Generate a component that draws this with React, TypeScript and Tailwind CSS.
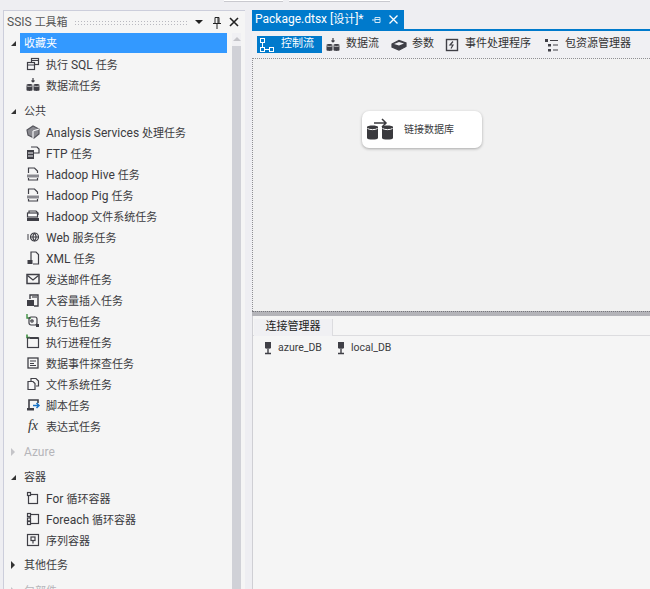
const ink = "#3f3f46";

function Svg({ children, w = 16, h = 16 }: { children: React.ReactNode; w?: number; h?: number }) {
  return (
    <svg width={w} height={h} viewBox={`0 0 ${w} ${h}`} className="shrink-0" fill="none" stroke={ink} strokeWidth="1.2">
      {children}
    </svg>
  );
}

const Db = ({ x, y }: { x: number; y: number }) => (
  <g transform={`translate(${x} ${y})`}>
    <path d="M0 1.500C0 .3 6 .3 6 1.500V6.500C6 7.700 0 7.700 0 6.500Z" fill={ink} stroke="none" />
    <path d="M0 2.200C1 3.200 5 3.200 6 2.200" stroke="#f5f5f5" strokeWidth=".7" />
  </g>
);

const icons: Record<string, React.ReactNode> = {
  sql: (
    <Svg>
      <rect x="6.500" y="2.500" width="7" height="6" />
      <rect x="2.500" y="6.500" width="7" height="7" fill="#f5f5f7" />
      <path d="M2.500 9h7M6.500 4.500h7" />
    </Svg>
  ),
  flow: (
    <Svg>
      <Db x={1.500} y={6.500} />
      <Db x={8.500} y={6.500} />
      <path d="M8 1v4M6.500 3.500 8 5l1.500-1.500" />
    </Svg>
  ),
  analysis: (
    <Svg>
      <path d="M2 6 8 2l6 3v5l-5 4-6-3Z" fill="#8a8a90" stroke="#55555c" />
      <path d="M8 7v7M8 7l6-2" stroke="#f5f5f7" />
    </Svg>
  ),
  ftp: (
    <Svg>
      <rect x="2" y="5" width="7" height="9" fill={ink} stroke="none" />
      <path d="M6 2h6l2 2v4h-5" />
      <path d="M3 8h5M3 11h5" stroke="#f5f5f7" />
    </Svg>
  ),
  doc: (
    <Svg>
      <path d="M3.500 7V2h6l3 3v2M3.500 12v2h9v-2" />
      <path d="M2 8.500h12v3H2Z" fill="#8a8a90" stroke="none" />
    </Svg>
  ),
  hdfs: (
    <Svg>
      <path d="M4 7V3h7l2 2v2" />
      <rect x="2.500" y="5" width="10" height="4" fill="#fff" />
      <path d="M2 10h12v3H2Z" fill={ink} stroke="none" />
    </Svg>
  ),
  web: (
    <Svg>
      <circle cx="9.500" cy="8" r="4" />
      <path d="M5.500 8h8M9.500 4c-2 2.500-2 5.500 0 8M9.500 4c2 2.500 2 5.500 0 8M2 6h2M2 8h2M2 10h2" />
    </Svg>
  ),
  xml: (
    <Svg>
      <path d="M6 11V2h5l2.500 2.500V14H8" />
      <rect x="2.500" y="10" width="5" height="4" fill={ink} stroke="none" />
    </Svg>
  ),
  mail: (
    <Svg>
      <rect x="2" y="3.500" width="12" height="9" strokeWidth="1.500" />
      <path d="m2.500 4.500 5.500 4.500 5.500-4.500" strokeWidth="1.300" />
    </Svg>
  ),
  bulk: (
    <Svg>
      <path d="M5 7V3h8v11H9" strokeWidth="1.400" />
      <path d="M2 8h7v6H2Z" fill={ink} stroke="none" />
      <path d="M7 5h5" />
    </Svg>
  ),
  pkg: (
    <Svg>
      <path d="M2 1v4h4" stroke="#3f9142" strokeWidth="1.400" />
      <rect x="4" y="4" width="8" height="8" rx="2" />
      <circle cx="7" cy="8" r="1.200" />
      <rect x="11" y="11" width="3" height="3" fill={ink} stroke="none" />
    </Svg>
  ),
  proc: (
    <Svg>
      <path d="M2 .5v3h3" stroke="#3f9142" strokeWidth="1.600" />
      <rect x="2.500" y="4" width="11" height="9.500" />
      <path d="M5 4h8.500" strokeWidth="2" />
    </Svg>
  ),
  probe: (
    <Svg>
      <rect x="3" y="3" width="10" height="10" strokeWidth="1.300" />
      <path d="M5 6h6M5 8.500h4M5 10.500h6" />
    </Svg>
  ),
  files: (
    <Svg>
      <path d="M6 5V2.500h5l2.500 2.500V10H11" />
      <path d="M3 5.500h5l2 2v6H3Z" fill="#f5f5f7" />
    </Svg>
  ),
  script: (
    <Svg>
      <path d="M4 11V3h9v3" strokeWidth="1.600" />
      <path d="M2 11h7v2.500H2Z" fill={ink} stroke="none" />
      <path d="M8 8.500h6M11.500 6l2.500 2.500-2.500 2.500" stroke="#1b74c7" strokeWidth="1.500" />
    </Svg>
  ),
  fx: (
    <span className="w-4 shrink-0 text-center font-['Liberation_Serif',serif] text-[14px] leading-4 text-[#333] italic">
      fx
    </span>
  ),
  forLoop: (
    <Svg>
      <rect x="3.500" y="4.500" width="9" height="9" />
      <rect x="2.500" y="2.500" width="3" height="3" fill="#f5f5f7" />
    </Svg>
  ),
  forEach: (
    <Svg>
      <rect x="5" y="3.500" width="8.500" height="9" />
      <rect x="2.500" y="2.500" width="3" height="3" fill="#f5f5f7" />
      <rect x="2.500" y="7" width="3" height="3" fill="#f5f5f7" />
      <rect x="2.500" y="10.500" width="3" height="3" fill="#f5f5f7" />
    </Svg>
  ),
  seq: (
    <Svg>
      <rect x="2.500" y="2.500" width="11" height="11" />
      <rect x="6" y="5" width="4" height="3.500" />
      <path d="M8 8.500v3" />
    </Svg>
  ),
};

// latin runs are set a bit larger than the chinese ones in the reference
const Mixed = ({ text }: { text: string }) => (
  <>
    {text.split(/([\u4e00-\u9fff]+)/).map((part, i) => (
      <span key={i} className={i % 2 ? "text-[11px]" : "text-[12px]"}>
        {part}
      </span>
    ))}
  </>
);

const Row = ({ icon, label }: { icon: string; label: string }) => (
  <div className="flex h-[21px] items-center gap-[5px] pl-[21px]">
    {icons[icon]}
    <span className="whitespace-pre">
      <Mixed text={label} />
    </span>
  </div>
);

function Section({
  label,
  open,
  active,
  muted,
  className,
}: {
  label: string;
  open?: boolean;
  active?: boolean;
  muted?: boolean;
  className?: string;
}) {
  return (
    <div className={`flex h-[20px] items-center ${className ?? ""}`}>
      <span className="flex w-[16px] shrink-0 justify-center pl-[2px]">
        {open ? (
          <span className="h-0 w-0 border-b-[5px] border-l-[5px] border-b-[#333] border-l-transparent" />
        ) : (
          <span
            className={`h-0 w-0 border-y-[4px] border-l-[4px] border-y-transparent ${
              muted ? "border-l-[#c4c4c8]" : "border-l-[#333]"
            }`}
          />
        )}
      </span>
      <span
        className={`flex h-[20px] flex-1 items-center pl-[4px] ${
          active ? "bg-[#3399ff] text-white" : muted ? "text-[#b5b5ba]" : ""
        }`}
      >
        <Mixed text={label} />
      </span>
    </div>
  );
}

function Toolbox() {
  return (
    <aside className="flex w-[242px] shrink-0 flex-col overflow-hidden border-t border-l border-[#cccedb] bg-[#f5f5f5] pr-[4px]">
      <div className="flex h-[22px] items-center pr-[2px] pl-[3px] leading-none whitespace-pre text-[#555]">
        <Mixed text="SSIS 工具箱" />
        <span className="mx-[6px] h-[5px] flex-1 bg-[radial-gradient(#b9b9c0_0.7px,transparent_0.8px)] bg-[length:3px_3px]" />
        <span className="mr-[9px] h-0 w-0 border-x-[4px] border-t-[4px] border-x-transparent border-t-[#222]" />
        <svg width="10" height="13" viewBox="0 0 10 13" className="mr-[7px]" fill="none" stroke="#222">
          <path d="M3 1.500h4v6H3ZM1 7.500h8M5 8v5M6 2v5" />
        </svg>
        <svg width="10" height="10" viewBox="0 0 10 10" stroke="#222" strokeWidth="1.600">
          <path d="m1 1 8 8M9 1 1 9" />
        </svg>
      </div>
      <div className="flex min-h-0 flex-1">
        <div className="min-w-0 flex-1 leading-none text-[#3b3b40]">
          <Section label="收藏夹" open active className="mr-[5px]" />
          <Row icon="sql" label="执行 SQL 任务" />
          <Row icon="flow" label="数据流任务" />
          <Section label="公共" open className="mt-[6px]" />
          <Row icon="analysis" label="Analysis Services 处理任务" />
          <Row icon="ftp" label="FTP 任务" />
          <Row icon="doc" label="Hadoop Hive 任务" />
          <Row icon="doc" label="Hadoop Pig 任务" />
          <Row icon="hdfs" label="Hadoop 文件系统任务" />
          <Row icon="web" label="Web 服务任务" />
          <Row icon="xml" label="XML 任务" />
          <Row icon="mail" label="发送邮件任务" />
          <Row icon="bulk" label="大容量插入任务" />
          <Row icon="pkg" label="执行包任务" />
          <Row icon="proc" label="执行进程任务" />
          <Row icon="probe" label="数据事件探查任务" />
          <Row icon="files" label="文件系统任务" />
          <Row icon="script" label="脚本任务" />
          <Row icon="fx" label="表达式任务" />
          <Section label="Azure" muted className="mt-[6px]" />
          <Section label="容器" open className="mt-[5px]" />
          <Row icon="forLoop" label="For 循环容器" />
          <Row icon="forEach" label="Foreach 循环容器" />
          <Row icon="seq" label="序列容器" />
          <Section label="其他任务" className="mt-[5px]" />
          <Section label="包部件" muted className="mt-[6px]" />
        </div>
        <div className="flex w-[9px] shrink-0 flex-col items-center bg-[#f0f0f3]">
          <span className="mt-[4px] mb-[5px] h-0 w-0 border-x-[4px] border-b-[4px] border-x-transparent border-b-[#c4c4c9]" />
          <div className="w-full flex-1 bg-[#d0d1d7]" />
        </div>
      </div>
    </aside>
  );
}

const DesignerTab = ({ label, active, icon }: { label: string; active?: boolean; icon: React.ReactNode }) => (
  <div
    className={`flex h-[17px] items-center gap-[5px] pl-[2px] ${
      active ? "bg-[#007acc] pr-[8px] text-white" : "pr-[3px] text-[#333]"
    }`}
  >
    {icon}
    {label}
  </div>
);

function Designer() {
  return (
    <main className="flex min-w-0 flex-1 flex-col overflow-hidden">
      <div className="flex h-[19px] w-[152px] shrink-0 items-center bg-[#007acc] pr-[6px] pl-[3px] text-[12px] whitespace-pre text-white">
        <span>
          <Mixed text="Package.dtsx [设计]*" />
        </span>
        <svg width="10" height="10" viewBox="0 0 10 10" className="mr-[7px] ml-auto" stroke="#cfe6f6" fill="none">
          <path d="M0 5h3M3 2.500v5h5v-5ZM3 4.500h5" />
        </svg>
        <svg width="9" height="9" viewBox="0 0 9 9" stroke="#fff" strokeWidth="1.300">
          <path d="m.5.5 8 8M8.500.5l-8 8" />
        </svg>
      </div>
      <div className="h-[2px] shrink-0 bg-[#007acc]" />
      <div className="flex h-[27px] shrink-0 items-center bg-[#f0f0f3] pl-[5px] text-[11px] whitespace-nowrap">
        <div className="mr-[1px]">
          <DesignerTab
            active
            label="控制流"
            icon={
              <svg width="17" height="16" viewBox="0 0 17 16" fill="none" stroke="#fff">
                <rect x="1.500" y="1.500" width="4" height="4" />
                <rect x="1.500" y="10.500" width="4" height="4" />
                <rect x="10.500" y="10.500" width="4" height="4" />
                <path d="M3.500 5.500v5M5.500 12.500h5" />
              </svg>
            }
          />
        </div>
        <div className="mr-[7px]">
          <DesignerTab label="数据流" icon={icons.flow} />
        </div>
        <div className="mr-[5px]">
          <DesignerTab
            label="参数"
            icon={
              <Svg>
                <path d="M1 7 8 3.500 15 6v3.500L8 13 1 10Z" fill={ink} />
                <path d="M3 7 8 5l5 1.500L8 8.500Z" fill="#f0f0f3" stroke="none" />
              </Svg>
            }
          />
        </div>
        <div className="mr-[8px]">
          <DesignerTab
            label="事件处理程序"
            icon={
              <Svg>
                <rect x="2.500" y="2.500" width="11" height="11" strokeWidth="1.400" />
                <path d="M9 4.500 6 8h3l-2 3.500" />
              </Svg>
            }
          />
        </div>
        <DesignerTab
          label="包资源管理器"
          icon={
            <Svg>
              <rect x="1" y="2" width="3" height="3" fill={ink} stroke="none" />
              <rect x="4" y="7" width="3" height="2.500" fill={ink} stroke="none" />
              <rect x="4" y="12" width="3" height="2.500" fill={ink} stroke="none" />
              <path d="M6 3.500h8M9 8h5M9 13h5" />
            </Svg>
          }
        />
      </div>
      <section className="flex min-h-0 flex-1 items-start border-t border-l border-dotted border-t-[#8f8f94] border-l-[#8f8f94] bg-[#f1f1f1] pt-[52px] pl-[109px]">
        <div className="flex h-[37px] w-[120px] items-center gap-[9px] rounded-[7px] bg-white pl-[3px] text-[10px] text-[#3b3b40] shadow-[0_1px_3px_rgba(0,0,0,0.3)]">
          <svg width="30" height="24" viewBox="0 0 30 24" className="shrink-0">
            <g fill="#3a3a3e">
              <path d="M2 9c0-2 11-2 11 0v11c0 2-11 2-11 0Z" />
              <path d="M17 9c0-2 11-2 11 0v11c0 2-11 2-11 0Z" />
            </g>
            <path d="M2.500 10.500c2 1.500 8 1.500 10 0M17.500 10.500c2 1.500 8 1.500 10 0" stroke="#fff" fill="none" />
            <path d="M9 5h12M17 1l4 4-4 4" stroke="#3a3a3e" strokeWidth="1.500" fill="none" />
          </svg>
          链接数据库
        </div>
      </section>
      <div className="h-[5px] shrink-0 border-t border-dotted border-t-[#77777c] bg-[#b4b4b9]" />
      <section className="flex h-[273px] shrink-0 flex-col border-l border-[#cfcfd4] bg-[#f5f5f5] text-[#3b3b40]">
        <div className="h-[20px] shrink-0 border-b border-[#dcdcdf] pt-[3px] pl-[1px]">
          <div className="flex h-[17px] w-[79px] items-center justify-center border-r border-[#dcdcdf] bg-[#f0f0f3] text-[11px] text-[#222]">
            连接管理器
          </div>
        </div>
        <div className="flex gap-[14px] pt-[4px] pl-[10px] text-[10.5px]">
          {["azure_DB", "local_DB"].map((name) => (
            <div key={name} className="flex items-center gap-[5px]">
              <svg width="10" height="14" viewBox="0 0 10 14">
                <path d="M2 1h6v6c0 1-6 1-6 0Z" fill={ink} />
                <path d="M5 8v4M2 12.500h6" stroke={ink} strokeWidth="1.400" />
              </svg>
              {name}
            </div>
          ))}
        </div>
      </section>
    </main>
  );
}

export default function App() {
  return (
    <div className="flex h-[589px] w-[650px] flex-col overflow-hidden bg-[#eeeef2] font-['Roboto','Noto_Sans_CJK_SC',sans-serif]">
      {/* bottom edge of the fields above the crop */}
      <div className="flex h-[10px] shrink-0 items-start pl-[224px]">
        <div className="h-[2px] w-[59px] border-b border-[#c9c9cf] bg-white" />
        <div className="ml-[6px] h-[2px] w-[101px] border-b border-[#c9c9cf] bg-white" />
      </div>
      <div className="flex min-h-0 flex-1 gap-[7px] pl-[3px]">
        <Toolbox />
        <Designer />
      </div>
    </div>
  );
}
